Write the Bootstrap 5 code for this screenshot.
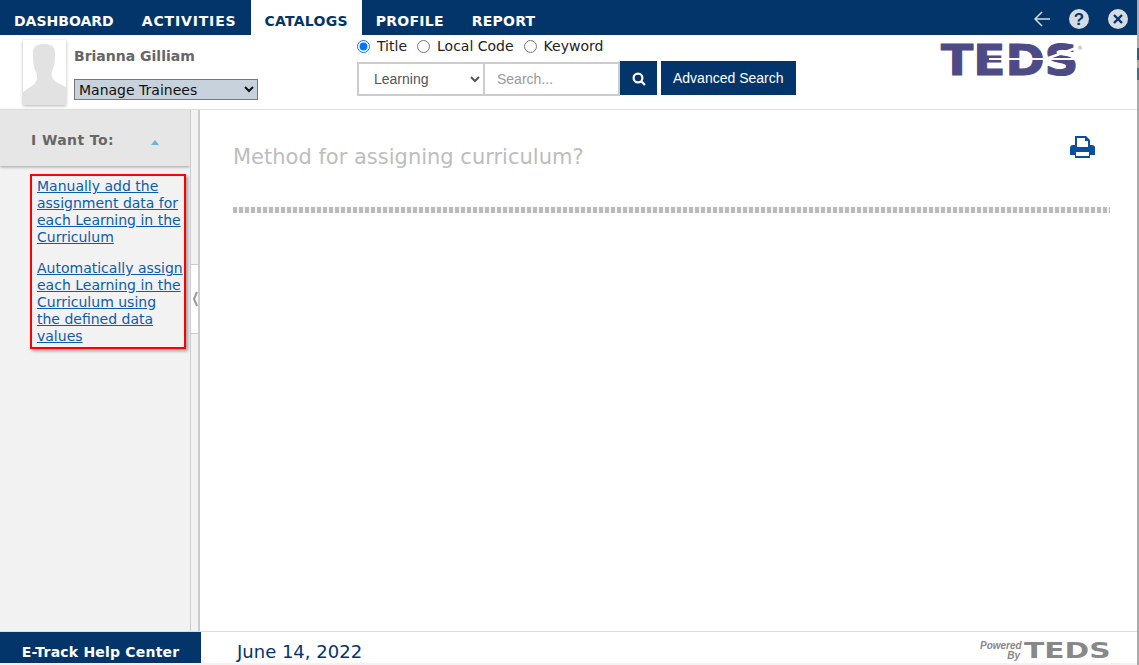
<!DOCTYPE html>
<html lang="en">
<head>
    <meta charset="UTF-8">
    <title>Method for assigning curriculum</title>
    <link href="https://cdn.jsdelivr.net/npm/bootstrap@5.3.0/dist/css/bootstrap.min.css" rel="stylesheet">
    <style>
        html, body { height: 100%; overflow: hidden; }
        body {
            font-family: "DejaVu Sans", Verdana, sans-serif;
            font-size: 14px;
            color: #222;
            background: linear-gradient(#aaa 48px, #3c5a7e 48px 60px, #aaa 60px 68px, #4d6c88 68px 80px, #aaa 80px);
        }
        .app-shell { width: 1137px; height: 665px; display: flex; flex-direction: column; background: #fff; }

        /* top tabs */
        .top-bar { height: 35px; background: #04356a; flex: none; }
        .top-tab {
            height: 35px;
            padding: 13px 14px 0 14px;
            font: bold 14px/16px "DejaVu Sans", Verdana, sans-serif;
            color: #fff;
            text-decoration: none;
            letter-spacing: .25px;
        }
        .top-tab:first-child { letter-spacing: 0; }
        .top-tab.wide-tab { letter-spacing: .85px; }
        .top-tab.on { background: #fff; color: #04356a; }
        .top-tools { padding: 3px 9px 0 0; gap: 19px; }

        /* header strip */
        .head-strip { height: 75px; flex: none; border-bottom: 1px solid #ddd; position: relative; }
        .user-box { width: 357px; padding: 5px 0 0 23px; }
        .user-pic {
            width: 43px; height: 65px; background: #fff;
            box-shadow: 0 1px 3px rgba(0,0,0,.3);
        }
        .user-name { font-weight: bold; font-size: 14px; color: #666; line-height: 17px; margin: 8px 0 14px; }
        .role-select {
            width: 184px; height: 21px; padding: 0;
            font-size: 14px; color: #111;
            background-color: #c8d2dc;
            border: 1px solid #777;
            border-radius: 0;
        }
        .search-box { padding-top: 1px; }
        .scope-row { font-size: 14px; height: 20px; gap: 10px; }
        .scope-row label { display: flex; align-items: center; gap: 7px; line-height: 18px; color: #222; }
        .scope-row input { margin: 0; width: 13px; height: 13px; }
        .search-row { margin-top: 5px; height: 35px; }
        .search-kind {
            width: 128px; height: 34px; margin-top: 1px; padding: 0 0 0 11px;
            font: 14px "Liberation Sans", Arial, sans-serif; color: #555;
            border: 2px solid #ccc; border-radius: 0; background: #fff;
        }
        .search-text {
            width: 135px; height: 34px; margin-top: 1px; padding: 0 12px;
            font: 14px "Liberation Sans", Arial, sans-serif;
            border: 2px solid #ccc; border-left: 0; border-radius: 0;
        }
        .search-text::placeholder { color: #999; }
        .navy-btn {
            height: 34px; background: #04356a; color: #fff; border: 0; border-radius: 0;
            font: 14px "Liberation Sans", Arial, sans-serif; padding: 0 12px;
        }
        .navy-btn.icon-only { width: 37px; padding: 0; }
        .teds-mark {
            position: absolute; left: 941px; top: 4px; height: 44px;
            font: bold 42.5px/44px "DejaVu Sans", sans-serif; color: #4e4a85;
            -webkit-text-stroke: 1px #4e4a85;
            transform: scaleX(1.11); transform-origin: left center;
        }
        .teds-cuts { position: absolute; left: 941px; top: 9px; }
        .teds-reg { position: absolute; left: 1077px; top: 9px; font-size: 6px; line-height: 7px; color: #999; }

        /* body */
        .mid-area { flex: 1; min-height: 0; }
        .side-col { width: 190px; flex: none; background: #f2f2f2; }
        .want-head {
            height: 56px; background: #e6e6e6;
            box-shadow: 0 1px 3px rgba(0,0,0,.35);
            padding: 5px 31px 0 31px;
            font-weight: bold; font-size: 14px; color: #666; letter-spacing: .4px;
        }
        .want-caret {
            width: 0; height: 0; margin-top: 4px;
            border: 4px solid transparent; border-top: 0;
            border-bottom: 5px solid #6db3d8;
        }
        .want-links {
            margin: 8px 0 0 30px; width: 156px; height: 175px;
            padding: 2px 0 0 5px;
            border: 2px solid #f00;
            box-shadow: 2px 2px 3px rgba(0,0,0,.35);
            line-height: 17px; font-size: 14px;
        }
        .want-links a { display: block; color: #0b5cad; margin-bottom: 14px; }
        .split-col {
            width: 10px; flex: none; position: relative;
            background: #f2f2f2;
            border-left: 1px solid #ccc; border-right: 2px solid #ccc;
        }
        .split-grip {
            position: absolute; left: 0; top: 154px; width: 7px; height: 70px;
            background: #fff; border-top: 1px solid #ccc; border-bottom: 1px solid #ccc;
            display: flex; align-items: center; justify-content: center;
        }
        .main-col { padding: 0 27px 0 33px; position: relative; }
        .page-title { font-size: 21px; font-weight: normal; color: #bdbdbd; line-height: 24px; margin: 35px 0 0; }
        .print-icon { position: absolute; right: 41px; top: 25px; }
        .dash-line { height: 6px; margin-top: 38px; background: repeating-linear-gradient(90deg, #bbb 0 4px, #f4f4f4 4px 6px); }

        /* footer */
        .foot-bar { height: 32px; flex: none; border-top: 1px solid #ddd; position: relative; }
        .help-box {
            width: 201px; background: #04356a; color: #fff; height: 31px;
            font-weight: bold; font-size: 14px; line-height: 40px; letter-spacing: .2px;
        }
        .foot-date { font-size: 18px; color: #04356a; padding-left: 36px; line-height: 40px; }
        .powered {
            position: absolute; left: 980px; top: 9px;
            display: flex; align-items: center; gap: 4px; color: #888;
        }
        .powered-by { width: 40px; font: italic bold 10px/10px "Liberation Sans", Arial, sans-serif; text-align: right; }
        .powered-logo {
            width: 60px; font: bold 22px/20px "DejaVu Sans", sans-serif;
            transform: scaleX(1.35); transform-origin: left center;
        }
        .foot-strip { height: 2px; flex: none; background: #f3f3f3; }
    </style>
</head>
<body>
<div class="app-shell">
    <div class="top-bar d-flex align-items-center">
        <a class="top-tab" href="#">DASHBOARD</a>
        <a class="top-tab wide-tab" href="#">ACTIVITIES</a>
        <a class="top-tab on" href="#">CATALOGS</a>
        <a class="top-tab" href="#">PROFILE</a>
        <a class="top-tab" href="#">REPORT</a>
        <div class="top-tools d-flex align-items-center ms-auto">
            <svg width="16" height="16" viewBox="0 0 16 16" fill="none" stroke="#d5dbe3" stroke-width="1.5"><path d="M16 8H1.5M8 1 1 8l7 7"/></svg>
            <svg width="20" height="20" viewBox="0 0 20 20"><circle cx="10" cy="10" r="10" fill="#d5dbe3"/><text x="10" y="16" text-anchor="middle" font-family="Liberation Sans" font-weight="bold" font-size="17" fill="#04356a">?</text></svg>
            <svg width="20" height="20" viewBox="0 0 20 20"><circle cx="10" cy="10" r="10" fill="#d5dbe3"/><path d="M6 6l8 8M14 6l-8 8" stroke="#04356a" stroke-width="2.4"/></svg>
        </div>
    </div>

    <div class="head-strip d-flex">
        <div class="user-box d-flex gap-2">
            <div class="user-pic">
                <svg width="43" height="65" viewBox="0 0 43 65"><path d="M10 12c0-6 5-8 11-8s11 2 11 8c0 9 0 13-3 19-1 4 0 8 4 11l10 5v18H0V52l10-7c4-3 5-8 3-13-3-6-3-11-3-20z" fill="#e2e2e2"/></svg>
            </div>
            <div>
                <div class="user-name">Brianna Gilliam</div>
                <select class="role-select"><option>Manage Trainees</option></select>
            </div>
        </div>
        <div class="search-box">
            <div class="scope-row d-flex align-items-center">
                <label><input type="radio" name="scope" checked>Title</label>
                <label><input type="radio" name="scope">Local Code</label>
                <label><input type="radio" name="scope">Keyword</label>
            </div>
            <div class="search-row d-flex">
                <select class="search-kind"><option>Learning</option></select>
                <input class="search-text" type="text" placeholder="Search...">
                <button class="navy-btn icon-only" type="button">
                    <svg width="14" height="14" viewBox="0 0 14 14" fill="none" stroke="#fff" stroke-width="2.2"><circle cx="6" cy="6" r="4.4"/><path d="M9.2 9.2 13 13"/></svg>
                </button>
                <button class="navy-btn ms-1" type="button">Advanced Search</button>
            </div>
        </div>
        <div class="teds-mark">TEDS</div>
        <svg class="teds-cuts" width="140" height="32" viewBox="0 0 140 32"><path d="M48 15h88" stroke="#fff" stroke-width="2"/><path d="M102 16 138 3" stroke="#fff" stroke-width="2.5"/></svg>
        <span class="teds-reg">&reg;</span>
    </div>

    <div class="mid-area d-flex">
        <div class="side-col">
            <div class="want-head d-flex align-items-center justify-content-between">
                <span>I Want To:</span><span class="want-caret"></span>
            </div>
            <div class="want-links">
                <a href="#">Manually add the assignment data for each Learning in the Curriculum</a>
                <a href="#">Automatically assign each Learning in the Curriculum using<br>the defined data<br>values</a>
            </div>
        </div>
        <div class="split-col">
            <div class="split-grip">
                <svg width="6" height="16" viewBox="0 0 6 16" fill="none" stroke="#999" stroke-width="2"><path d="M5 1 2 8l3 7"/></svg>
            </div>
        </div>
        <div class="main-col flex-grow-1">
            <h1 class="page-title">Method for assigning curriculum?</h1>
            <svg class="print-icon" width="27" height="24" viewBox="0 0 27 24" fill="#0a4f9e"><path d="M6 1h11l4 4v5h2a3 3 0 0 1 3 3v7h-5v3H6v-3H1v-7a3 3 0 0 1 3-3h2zm2 2v9h11V6h-3V3zM7 17v4h13v-4z" fill-rule="evenodd"/></svg>
            <div class="dash-line"></div>
        </div>
    </div>

    <div class="foot-bar d-flex">
        <div class="help-box text-center">E-Track Help Center</div>
        <div class="foot-date">June 14, 2022</div>
        <div class="powered">
            <div class="powered-by">Powered<br>By</div>
            <div class="powered-logo">TEDS</div>
        </div>
    </div>
    <div class="foot-strip"></div>
</div>
<script src="https://cdn.jsdelivr.net/npm/bootstrap@5.3.0/dist/js/bootstrap.bundle.min.js"></script>
</body>
</html>
